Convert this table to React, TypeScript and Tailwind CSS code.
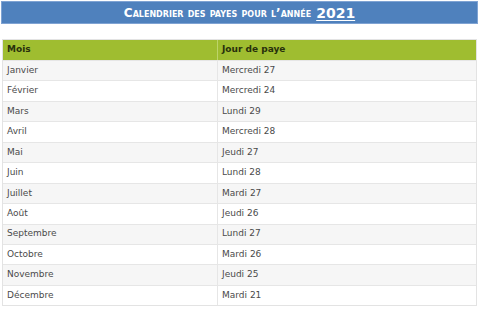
import React from 'react';

const rows: [string, string][] = [
  ['Janvier', 'Mercredi 27'],
  ['Février', 'Mercredi 24'],
  ['Mars', 'Lundi 29'],
  ['Avril', 'Mercredi 28'],
  ['Mai', 'Jeudi 27'],
  ['Juin', 'Lundi 28'],
  ['Juillet', 'Mardi 27'],
  ['Août', 'Jeudi 26'],
  ['Septembre', 'Lundi 27'],
  ['Octobre', 'Mardi 26'],
  ['Novembre', 'Jeudi 25'],
  ['Décembre', 'Mardi 21'],
];

export default function App() {
  return (
    <div className="w-[480px] h-[309px] bg-white pt-[1px] px-[1px] font-['DejaVu_Sans',sans-serif]">
      <div className="w-[477px] h-[23px] bg-[#4f81bd] border border-[#7fa3d3] flex items-center justify-center text-white font-bold">
        <span className="text-[12px] [font-variant:small-caps] leading-none">Calendrier des payes pour l&#8217;année</span>
        <span className="ml-[5px] text-[14px] underline underline-offset-[2px] leading-none">2021</span>
      </div>

      <div className="mt-[15px] ml-[1px] w-[475px] border border-[#e3e3e3] text-[9px]">
        <div className="flex h-[20px] bg-[#9fbd30] text-[#28300c] font-bold items-center">
          <div className="w-[215px] h-full flex items-center pl-[4px] border-r border-[#bdd46a]">Mois</div>
          <div className="flex-1 pl-[4px]">Jour de paye</div>
        </div>
        {rows.map(([mois, jour], i) => (
          <div
            key={mois}
            className={`flex h-[20.45px] items-center text-[#4a4a4a] border-t border-[#e6e6e6] ${i % 2 === 0 ? 'bg-[#f6f6f6]' : 'bg-white'}`}
          >
            <div className="w-[215px] h-full flex items-center pl-[4px] border-r border-[#e6e6e6]">{mois}</div>
            <div className="flex-1 pl-[4px]">{jour}</div>
          </div>
        ))}
      </div>
    </div>
  );
}
